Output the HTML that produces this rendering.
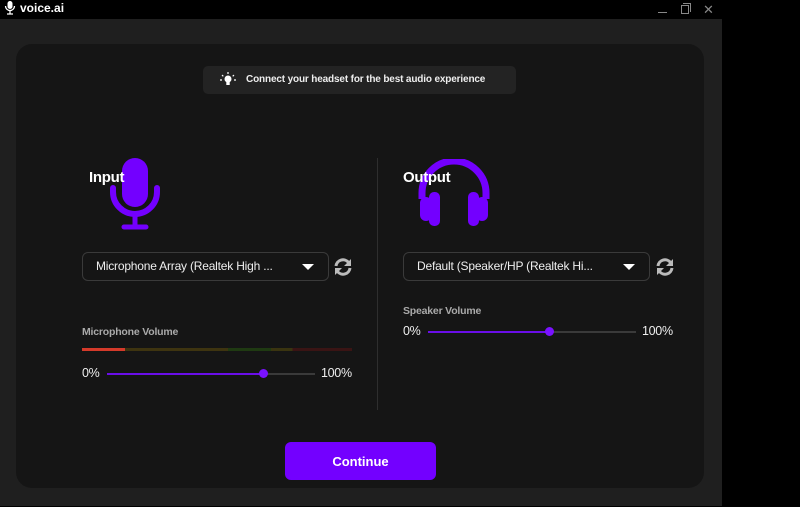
<!DOCTYPE html>
<html><head><meta charset="utf-8"><style>
*{margin:0;padding:0;box-sizing:border-box}
body{width:800px;height:507px;background:#000;position:relative;overflow:hidden;font-family:"Liberation Sans",Arial,sans-serif;color:#fff}
.abs{position:absolute}
.outer{left:0;top:19px;width:722px;height:487px;background:#1f1f1f}
.panel{left:16px;top:44px;width:688px;height:444px;background:#151515;border-radius:16px}
.tip{left:203px;top:66px;width:313px;height:28px;background:#232323;border-radius:5px;font-size:10px;letter-spacing:-0.15px;font-weight:bold;line-height:28px;padding-left:43px;color:#eee;white-space:nowrap}
.h{font-size:15px;font-weight:bold;letter-spacing:-0.3px}
.sel{height:29px;border:1px solid #3a3a3a;border-radius:6px;background:#151515;font-size:12px;letter-spacing:-0.2px;line-height:27px;padding-left:13px;color:#eee;white-space:nowrap}
.arrow{position:absolute;right:14px;top:11px;width:0;height:0;border-left:6px solid transparent;border-right:6px solid transparent;border-top:6px solid #fff}
.lbl{font-size:10.5px;font-weight:bold;color:#aaa;letter-spacing:-0.2px}
.pct{font-size:12.5px;color:#eee;letter-spacing:-0.3px}
.track{height:2px;background:#3a3a3a}
.fill{height:2px;background:#6a0ee8}
.knob{width:9px;height:9px;border-radius:50%;background:#7a12ff}
.btn{left:285px;top:442px;width:151px;height:38px;background:#7300ff;border-radius:6px;font-size:13px;font-weight:bold;text-align:center;line-height:40px}
</style></head><body>
<div class="abs" style="left:4px;top:1px;font-size:14px;line-height:14px">
<svg width="12" height="14" viewBox="0 0 12 14" style="vertical-align:top"><rect x="3.5" y="0" width="5" height="8" rx="2.5" fill="#fff"/><path d="M1.5 5a4.5 4.5 0 0 0 9 0M6 9.5v3M3 13h6" stroke="#fff" stroke-width="1.3" fill="none"/></svg></div>
<div class="abs" style="left:20px;top:1px;font-size:12px;font-weight:bold">voice.ai</div>
<div class="abs" style="left:658px;top:12px;width:9px;height:1px;background:#888"></div>
<div class="abs" style="left:681px;top:5px;width:8px;height:9px;border:1px solid #888"></div>
<div class="abs" style="left:683px;top:3px;width:8px;height:9px;border-top:1px solid #888;border-right:1px solid #888"></div>
<div class="abs" style="left:703px;top:2px;font-size:13px;color:#888">✕</div>
<div class="abs outer"></div>
<div class="abs panel"></div>
<div class="abs tip">Connect your headset for the best audio experience</div>
<svg class="abs" style="left:219px;top:72px" width="18" height="16" viewBox="0 0 18 16"><circle cx="9" cy="7" r="3.5" fill="#fff"/><rect x="7.3" y="9" width="3.4" height="4" fill="#fff"/><path d="M9 0v2M3 3l1.3 1.3M15 3l-1.3 1.3M1 8h2M15 8h2" stroke="#fff" stroke-width="1.2"/></svg>

<div class="abs" style="left:377px;top:158px;width:1px;height:252px;background:#2e2e2e"></div>

<svg class="abs" style="left:109px;top:158px" width="52" height="72" viewBox="0 0 52 72"><rect x="13" y="0" width="26" height="49" rx="13" fill="#7300ff"/><path d="M4 30v4a22 22 0 0 0 44 0v-4" stroke="#7300ff" stroke-width="6" fill="none" stroke-linecap="round"/><path d="M26 56v11M15 69h22" stroke="#7300ff" stroke-width="5" stroke-linecap="round"/></svg>
<div class="abs h" style="left:89px;top:169px">Input</div>

<svg class="abs" style="left:418px;top:159px" width="72" height="68" viewBox="0 0 72 68"><path d="M4 40v-6a32 32 0 0 1 64 0v6" stroke="#7300ff" stroke-width="7" fill="none"/><rect x="11" y="33" width="11" height="34" rx="5" fill="#7300ff"/><rect x="2" y="38" width="12" height="24" rx="6" fill="#7300ff"/><rect x="50" y="33" width="11" height="34" rx="5" fill="#7300ff"/><rect x="58" y="38" width="12" height="24" rx="6" fill="#7300ff"/></svg>
<div class="abs h" style="left:403px;top:169px">Output</div>

<div class="abs sel" style="left:82px;top:252px;width:247px">Microphone Array (Realtek High ...<span class="arrow"></span></div>
<div class="abs sel" style="left:403px;top:252px;width:247px">Default (Speaker/HP (Realtek Hi...<span class="arrow"></span></div>
<svg class="abs" style="left:334px;top:258px" width="18" height="18" viewBox="0 0 18 18"><path d="M2 8a7 7 0 0 1 12.5-3.5M16 10a7 7 0 0 1-12.5 3.5" stroke="#bbb" stroke-width="3" fill="none"/><path d="M17 1v7h-7zM1 17v-7h7z" fill="#bbb"/></svg>
<svg class="abs" style="left:656px;top:258px" width="18" height="18" viewBox="0 0 18 18"><path d="M2 8a7 7 0 0 1 12.5-3.5M16 10a7 7 0 0 1-12.5 3.5" stroke="#bbb" stroke-width="3" fill="none"/><path d="M17 1v7h-7zM1 17v-7h7z" fill="#bbb"/></svg>

<div class="abs lbl" style="left:82px;top:326px">Microphone Volume</div>
<div class="abs" style="left:82px;top:348px;width:270px;height:3px;background:linear-gradient(90deg,#d43a2a 0,#d43a2a 16%,#3e3410 16%,#3e3410 54%,#1f3a12 54%,#1f3a12 70%,#3a3410 70%,#3a3410 78%,#3a1414 78%)"></div>
<div class="abs pct" style="left:82px;top:366px">0%</div>
<div class="abs track" style="left:107px;top:373px;width:208px"></div>
<div class="abs fill" style="left:107px;top:373px;width:156px"></div>
<div class="abs knob" style="left:259px;top:369px"></div>
<div class="abs pct" style="left:321px;top:366px">100%</div>

<div class="abs lbl" style="left:403px;top:305px">Speaker Volume</div>
<div class="abs pct" style="left:403px;top:324px">0%</div>
<div class="abs track" style="left:428px;top:331px;width:208px"></div>
<div class="abs fill" style="left:428px;top:331px;width:121px"></div>
<div class="abs knob" style="left:545px;top:327px"></div>
<div class="abs pct" style="left:642px;top:324px">100%</div>

<div class="abs btn">Continue</div>
</body></html>
